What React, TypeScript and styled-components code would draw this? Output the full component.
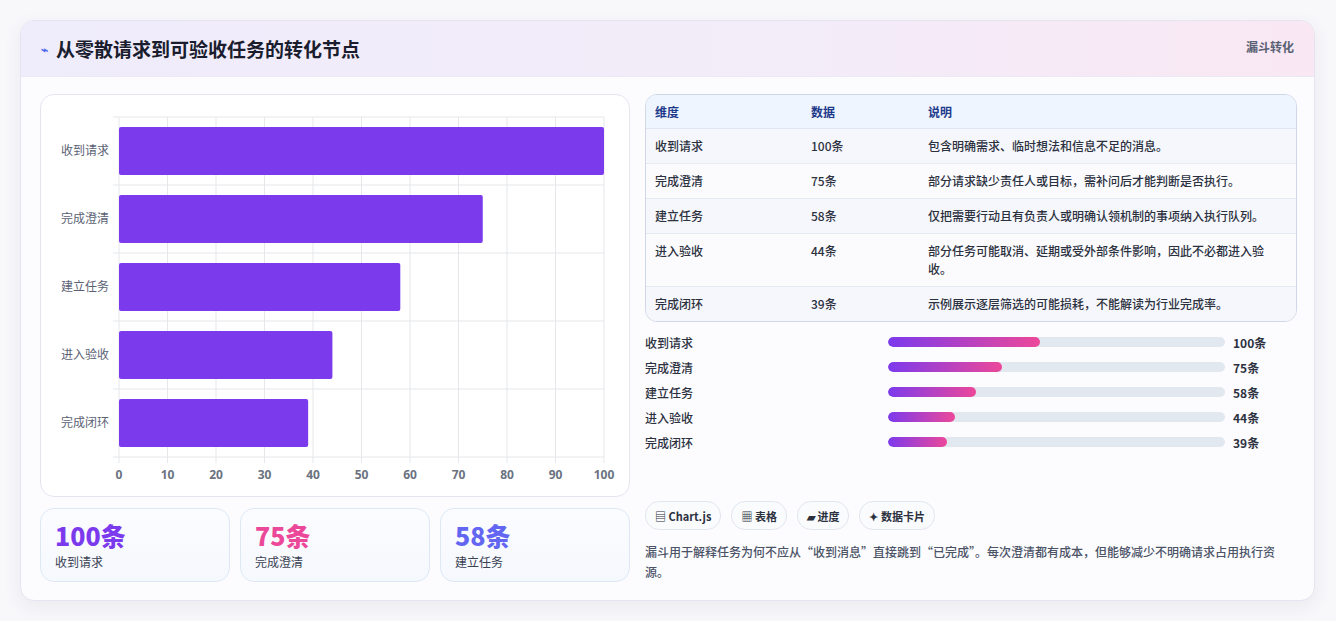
import React from 'react';
import styled, { createGlobalStyle } from 'styled-components';

const Global = createGlobalStyle`
  body { margin: 0; background: #f8f8fb; font-family: 'Noto Sans CJK SC', 'Noto Sans', sans-serif; }
`;

const Page = styled.div`
  padding: 20px 21px 21px 20px;
`;

const Card = styled.div`
  background: #fcfcff;
  border: 1px solid #e6e4f0;
  border-radius: 14px;
  box-shadow: 0 6px 18px rgba(60, 60, 100, 0.08);
  overflow: hidden;
`;

const Header = styled.div`
  height: 55px;
  display: flex;
  align-items: center;
  justify-content: space-between;
  padding: 0 20px;
  background: linear-gradient(90deg, #efecfb 0%, #f3ecf9 60%, #f9e8f3 100%);
  border-bottom: 1px solid #ece9f5;
`;

const Title = styled.h1`
  margin: 0;
  font-size: 19px;
  font-weight: 700;
  color: #1a1d2e;
  display: flex;
  align-items: center;
  gap: 8px;
`;

const Tag = styled.span`
  align-self: flex-start;
  margin-top: 17px;
  font-size: 12px;
  font-weight: 700;
  color: #5b6275;
`;

const Body = styled.div`
  display: grid;
  grid-template-columns: 590px 652px;
  gap: 15px;
  padding: 17px 18px 18px 19px;
`;

const Col = styled.div`
  display: flex;
  flex-direction: column;
`;

const ChartBox = styled.div`
  height: 403px;
  background: #fff;
  border: 1px solid #e3e6ef;
  border-radius: 14px;
  box-sizing: border-box;
`;

const Stats = styled.div`
  display: grid;
  grid-template-columns: repeat(3, 1fr);
  gap: 10px;
  margin-top: 11px;
`;

const Stat = styled.div`
  height: 74px;
  box-sizing: border-box;
  border: 1px solid #dde8f4;
  border-radius: 14px;
  background: linear-gradient(180deg, #fbfcff, #f5f8fd);
  padding: 12px 14px;
`;

const StatNum = styled.div<{ $c: string }>`
  font-size: 25px;
  font-weight: 800;
  line-height: 28px;
  color: ${p => p.$c};
`;

const StatLabel = styled.div`
  font-size: 12px;
  color: #3a4152;
  margin-top: 4px;
`;

const Table = styled.table`
  width: 100%;
  border-collapse: separate;
  border-spacing: 0;
  border: 1px solid #cfd8e6;
  border-radius: 12px;
  overflow: hidden;
  font-size: 12px;
  color: #2c3140;
  th {
    background: #eef5ff;
    color: #1e3a8a;
    font-weight: 700;
    text-align: left;
    height: 33px;
    padding: 0 9px;
    border-bottom: 1px solid #dfe6f1;
  }
  td {
    padding: 8px 9px;
    line-height: 18px;
    font-weight: 500;
    border-bottom: 1px solid #e6eaf2;
    vertical-align: top;
  }
  tr:nth-child(odd) td { background: #f6f7fc; }
  tr:nth-child(even) td { background: #fbfbfe; }
  tr:last-child td { border-bottom: none; }
`;

const Progress = styled.div`
  display: flex;
  flex-direction: column;
  gap: 7px;
  margin-top: 11px;
`;

const PRow = styled.div`
  display: grid;
  grid-template-columns: 243px 337px 1fr;
  align-items: center;
  gap: 0;
  height: 18px;
  font-size: 12px;
  color: #2c3140;
  font-weight: 500;
`;

const Track = styled.div`
  height: 10px;
  border-radius: 5px;
  background: #e2e8f0;
  overflow: hidden;
`;

const Fill = styled.div`
  height: 100%;
  border-radius: 5px;
  background: linear-gradient(90deg, #7c3aed, #ec4899);
`;

const PVal = styled.span`
  padding-left: 8px;
  font-weight: 700;
`;

const Chips = styled.div`
  display: flex;
  gap: 10px;
  margin-top: auto;
`;

const Chip = styled.span`
  height: 27px;
  padding: 0 9px;
  display: inline-flex;
  align-items: center;
  gap: 3px;
  border: 1px solid #e3e6ee;
  border-radius: 14px;
  background: #fafbfd;
  font-size: 11px;
  font-weight: 700;
  color: #2c3140;
`;

const Note = styled.p`
  margin: 12px 0 0;
  font-size: 12px;
  line-height: 20px;
  font-weight: 500;
  color: #4b5366;
`;

const data = [
  { name: '收到请求', v: 100, d: '包含明确需求、临时想法和信息不足的消息。' },
  { name: '完成澄清', v: 75, d: '部分请求缺少责任人或目标，需补问后才能判断是否执行。' },
  { name: '建立任务', v: 58, d: '仅把需要行动且有负责人或明确认领机制的事项纳入执行队列。' },
  { name: '进入验收', v: 44, d: '部分任务可能取消、延期或受外部条件影响，因此不必都进入验收。' },
  { name: '完成闭环', v: 39, d: '示例展示逐层筛选的可能损耗，不能解读为行业完成率。' },
];

const BarChart = () => {
  const x0 = 78, x1 = 563, y0 = 22, y1 = 362;
  const band = (y1 - y0) / 5;
  return (
    <svg width="590" height="401" style={{ display: 'block' }}>
      {Array.from({ length: 11 }).map((_, i) => {
        const x = x0 + ((x1 - x0) * i) / 10;
        return (
          <g key={i}>
            <line x1={x} x2={x} y1={y0} y2={y1 + 6} stroke="#e5e7eb" />
            <text x={x} y={y1 + 22} fontSize="12" fontWeight="700" fill="#6b7280" textAnchor="middle" fontFamily="Noto Sans">{i * 10}</text>
          </g>
        );
      })}
      {Array.from({ length: 6 }).map((_, i) => (
        <line key={i} x1={x0 - 6} x2={x1} y1={y0 + band * i} y2={y0 + band * i} stroke="#e5e7eb" />
      ))}
      {data.map((r, i) => {
        const yc = y0 + band * i + band / 2;
        return (
          <g key={r.name}>
            <text x={x0 - 10} y={yc + 4} fontSize="12" fill="#5b6275" textAnchor="end" fontFamily="Noto Sans CJK SC">{r.name}</text>
            <rect x={x0} y={yc - 24} width={((x1 - x0) * r.v) / 100} height={48} rx="2" fill="#7c3aed" />
          </g>
        );
      })}
    </svg>
  );
};

export default function App() {
  return (
    <Page>
      <Global />
      <Card>
        <Header>
          <Title><span style={{ color: '#4f6cf0', fontSize: 12 }}>⌁</span>从零散请求到可验收任务的转化节点</Title>
          <Tag>漏斗转化</Tag>
        </Header>
        <Body>
          <Col>
            <ChartBox><BarChart /></ChartBox>
            <Stats>
              <Stat><StatNum $c="#7c3aed">100条</StatNum><StatLabel>收到请求</StatLabel></Stat>
              <Stat><StatNum $c="#ec4899">75条</StatNum><StatLabel>完成澄清</StatLabel></Stat>
              <Stat><StatNum $c="#6366f1">58条</StatNum><StatLabel>建立任务</StatLabel></Stat>
            </Stats>
          </Col>
          <Col>
            <Table>
              <colgroup><col style={{ width: 156 }} /><col style={{ width: 117 }} /><col /></colgroup>
              <thead><tr><th>维度</th><th>数据</th><th>说明</th></tr></thead>
              <tbody>
                {data.map(r => (
                  <tr key={r.name}><td>{r.name}</td><td>{r.v}条</td><td>{r.d}</td></tr>
                ))}
              </tbody>
            </Table>
            <Progress>
              {data.map(r => (
                <PRow key={r.name}>
                  <span>{r.name}</span>
                  <Track><Fill style={{ width: `${(r.v / 100) * 45}%` }} /></Track>
                  <PVal>{r.v}条</PVal>
                </PRow>
              ))}
            </Progress>
            <Chips>
              <Chip>▤ Chart.js</Chip>
              <Chip>▦ 表格</Chip>
              <Chip>▰ 进度</Chip>
              <Chip>✦ 数据卡片</Chip>
            </Chips>
            <Note>漏斗用于解释任务为何不应从“收到消息”直接跳到“已完成”。每次澄清都有成本，但能够减少不明确请求占用执行资源。</Note>
          </Col>
        </Body>
      </Card>
    </Page>
  );
}
